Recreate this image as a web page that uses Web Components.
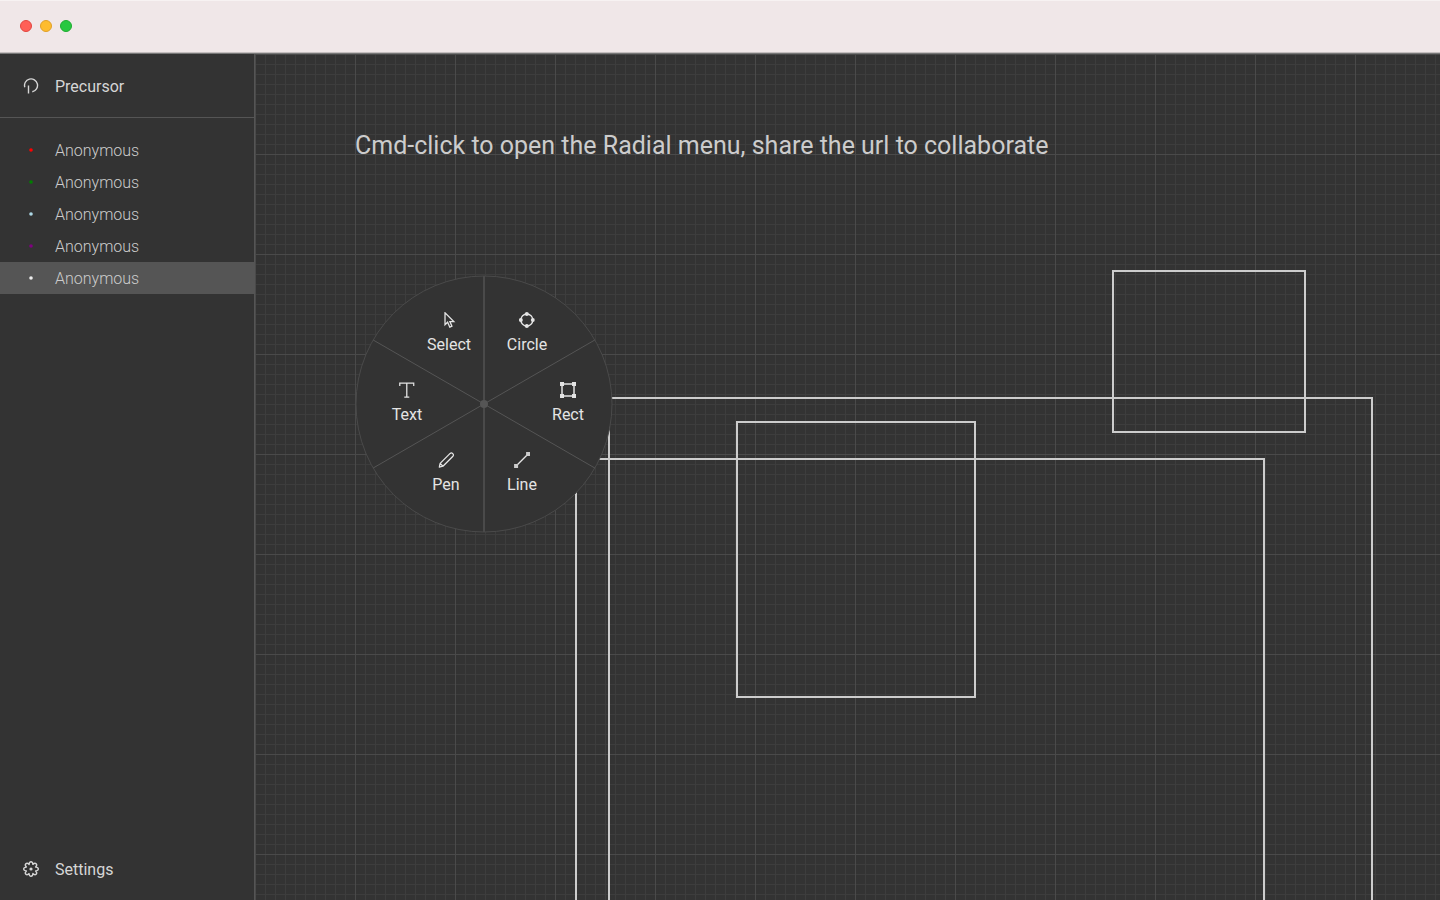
<!DOCTYPE html>
<html lang="en">
<head>
<meta charset="utf-8">
<title>Precursor</title>
<style>
html, body { height: 100%; margin: 0; }
body { background: #333; color: #d6d6d6; font: 400 16px/32px Roboto, sans-serif; }
</style>
</head>
<body>
<precursor-app></precursor-app>
<script>
const define = (name, html) => {
  const template = document.createElement('template');
  template.innerHTML = html;
  customElements.define(name, class extends HTMLElement {
    constructor() {
      super();
      this.attachShadow({ mode: 'open' }).append(template.content.cloneNode(true));
    }
  });
};

define('title-bar', `
<style>
:host { display: flex; align-items: center; gap: 8px; height: 52px; padding: 0 20px; box-sizing: border-box; background: #f0e7e8; box-shadow: inset 0 1px #f7f2f2; }
button { width: 12px; height: 12px; padding: 0; border-radius: 50%; border: 1px solid #e2463f; background: #ff5f57; }
.min { background: #febc2e; border-color: #e0a028; }
.max { background: #28c840; border-color: #1eac30; }
</style>
<button aria-label="Close"></button><button class="min" aria-label="Minimize"></button><button class="max" aria-label="Zoom"></button>`);

define('side-item', `
<style>
:host { display: block; }
a { display: flex; align-items: center; gap: 16px; padding-left: 23px; height: 32px; color: inherit; text-decoration: none; }
span { padding-top: 2px; }
::slotted(svg) { display: block; flex: none; width: 16px; height: 16px; fill: none; stroke: #d6d6d6; stroke-width: 1.4; }
</style>
<a href="#"><slot name="icon"></slot><span><slot></slot></span></a>`);

define('chat-person', `
<style>
:host { display: flex; align-items: center; gap: 16px; height: 32px; padding-left: 23px; font-weight: 300; color: #ccc; }
:host([current]) { background: #555; }
span { padding-top: 2px; }
svg { width: 16px; height: 16px; fill: var(--dot); }
</style>
<svg viewBox="0 0 16 16"><circle cx="8" cy="8" r="1.8"/></svg><span><slot></slot></span>`);

define('side-bar', `
<style>
:host { display: flex; flex-direction: column; box-sizing: border-box; width: 255px; border-right: 1px solid #555; background: #333; }
header { padding: 16px 0 15px; border-bottom: 1px solid #555; }
section { flex: 1; padding-top: 16px; }
footer { padding-bottom: 15px; }
</style>
<header><side-item><svg slot="icon" viewBox="0 0 16 16"><path d="M1.8 9.3A6.5 6.5 0 1 1 9.3 13.8M5.5 7.5V15.5"/></svg>Precursor</side-item></header>
<section>
<chat-person style="--dot:red">Anonymous</chat-person>
<chat-person style="--dot:green">Anonymous</chat-person>
<chat-person style="--dot:lightblue">Anonymous</chat-person>
<chat-person style="--dot:purple">Anonymous</chat-person>
<chat-person current style="--dot:#eee">Anonymous</chat-person>
</section>
<footer><side-item><svg slot="icon" viewBox="0 0 16 16"><path stroke-linejoin="round" d="M6.1 3.4C6.1-.2 9.9-.2 9.9 3.4C12.45 .86 15.14 3.55 12.6 6.1C16.2 6.1 16.2 9.9 12.6 9.9C15.14 12.45 12.45 15.14 9.9 12.6C9.9 16.2 6.1 16.2 6.1 12.6C3.55 15.14 .86 12.45 3.4 9.9C-.2 9.9-.2 6.1 3.4 6.1C.86 3.55 3.55 .86 6.1 3.4Z"/><circle cx="8" cy="8" r="1.6" fill="#d6d6d6" stroke="none"/></svg>Settings</side-item></footer>`);

define('radial-item', `
<style>
:host { position: absolute; transform: translate(-50%, -50%); }
button { display: flex; flex-direction: column; align-items: center; gap: 6px; padding: 0; border: 0; background: none; color: #e4e4e4; font: inherit; line-height: 22px; }
::slotted(svg) { display: block; width: 16px; height: 16px; fill: none; stroke: #e4e4e4; stroke-width: 1.3; }
</style>
<button><slot name="icon"></slot><slot></slot></button>`);

define('radial-menu', `
<style>
:host { position: absolute; width: 258px; height: 258px; }
.wheel { display: block; width: 100%; height: 100%; fill: #333; stroke: #4a4a4a; }
</style>
<svg class="wheel" viewBox="-129 -129 258 258"><circle r="128"/><path stroke-width="2" d="M0-128V128"/><path stroke="#555" d="M-110.8-64 110.8 64M-110.8 64 110.8-64"/><circle r="4" fill="#555" stroke="none"/></svg>
<radial-item style="left:94px;top:59px"><svg slot="icon" viewBox="0 0 16 16"><path d="M4 .8V12.8L6.6 10.2 8.8 15.2 10.9 14.2 8.9 9.6H12.8Z"/></svg>Select</radial-item>
<radial-item style="left:172px;top:59px"><svg slot="icon" viewBox="0 0 16 16"><circle cx="8" cy="8" r="6"/><g fill="#e4e4e4" stroke="none"><circle cx="8" cy="2" r="2"/><circle cx="14" cy="8" r="2"/><circle cx="8" cy="14" r="2"/><circle cx="2" cy="8" r="2"/></g></svg>Circle</radial-item>
<radial-item style="left:52px;top:129px"><svg slot="icon" viewBox="0 0 16 16"><path d="M1 4V1.2H15V4M8 1.2V15.2M5.5 15.2H10.5"/></svg>Text</radial-item>
<radial-item style="left:213px;top:129px"><svg slot="icon" viewBox="0 0 16 16"><path stroke="#b8b8b8" stroke-width="2" d="M2 2H14V14H2Z"/><path fill="#e4e4e4" stroke="none" d="M0 0H4V4H0ZM12 0H16V4H12ZM0 12H4V16H0ZM12 12H16V16H12Z"/></svg>Rect</radial-item>
<radial-item style="left:91px;top:199px"><svg slot="icon" viewBox="0 0 16 16"><path stroke-linejoin="round" d="M.9 15.1 1.8 11.4 11.8 1.4Q13.1 .3 14.4 1.6 15.7 2.9 14.6 4.2L4.6 14.2ZM1.8 11.4 4.6 14.2"/></svg>Pen</radial-item>
<radial-item style="left:167px;top:199px"><svg slot="icon" viewBox="0 0 16 16"><path d="M2 14 14 2"/><path fill="#ccc" stroke="none" d="M0 12H4V16H0ZM12 0H16V4H12Z"/></svg>Line</radial-item>`);

define('drawing-canvas', `
<style>
:host { display: block; position: relative; flex: 1; min-width: 0; overflow: hidden; background-color: #333;
  background-image: linear-gradient(90deg, #4a4a4a 1px, transparent 1px), linear-gradient(#4a4a4a 1px, transparent 1px), linear-gradient(90deg, #3d3d3d 1px, transparent 1px), linear-gradient(#3d3d3d 1px, transparent 1px);
  background-size: 100px 100px, 100px 100px, 10px 10px, 10px 10px; }
.shapes { position: absolute; width: 100%; height: 100%; overflow: visible; fill: none; stroke: #ccc; stroke-width: 2; }
h1 { position: relative; margin: 0; padding: 76px 0 0 100px; font-size: 25px; line-height: 32px; font-weight: 400; color: #ccc; }
radial-menu { left: 100px; top: 221px; }
</style>
<svg class="shapes"><rect x="858" y="217" width="192" height="161"/><rect x="354" y="344" width="763" height="700"/><rect x="321" y="405" width="688" height="700"/><rect x="482" y="368" width="238" height="275"/></svg>
<h1>Cmd-click to open the Radial menu, share the url to collaborate</h1>
<radial-menu></radial-menu>`);

define('precursor-app', `
<style>
:host { display: flex; flex-direction: column; min-height: 100vh; }
title-bar { flex: none; }
hr { width: 100%; height: 1px; margin: 0; border: 0; background: #c4bebe; }
main { flex: 1; display: flex; border-top: 1px solid #777; }
</style>
<title-bar></title-bar><hr><main><side-bar></side-bar><drawing-canvas></drawing-canvas></main>`);
</script>
</body>
</html>
